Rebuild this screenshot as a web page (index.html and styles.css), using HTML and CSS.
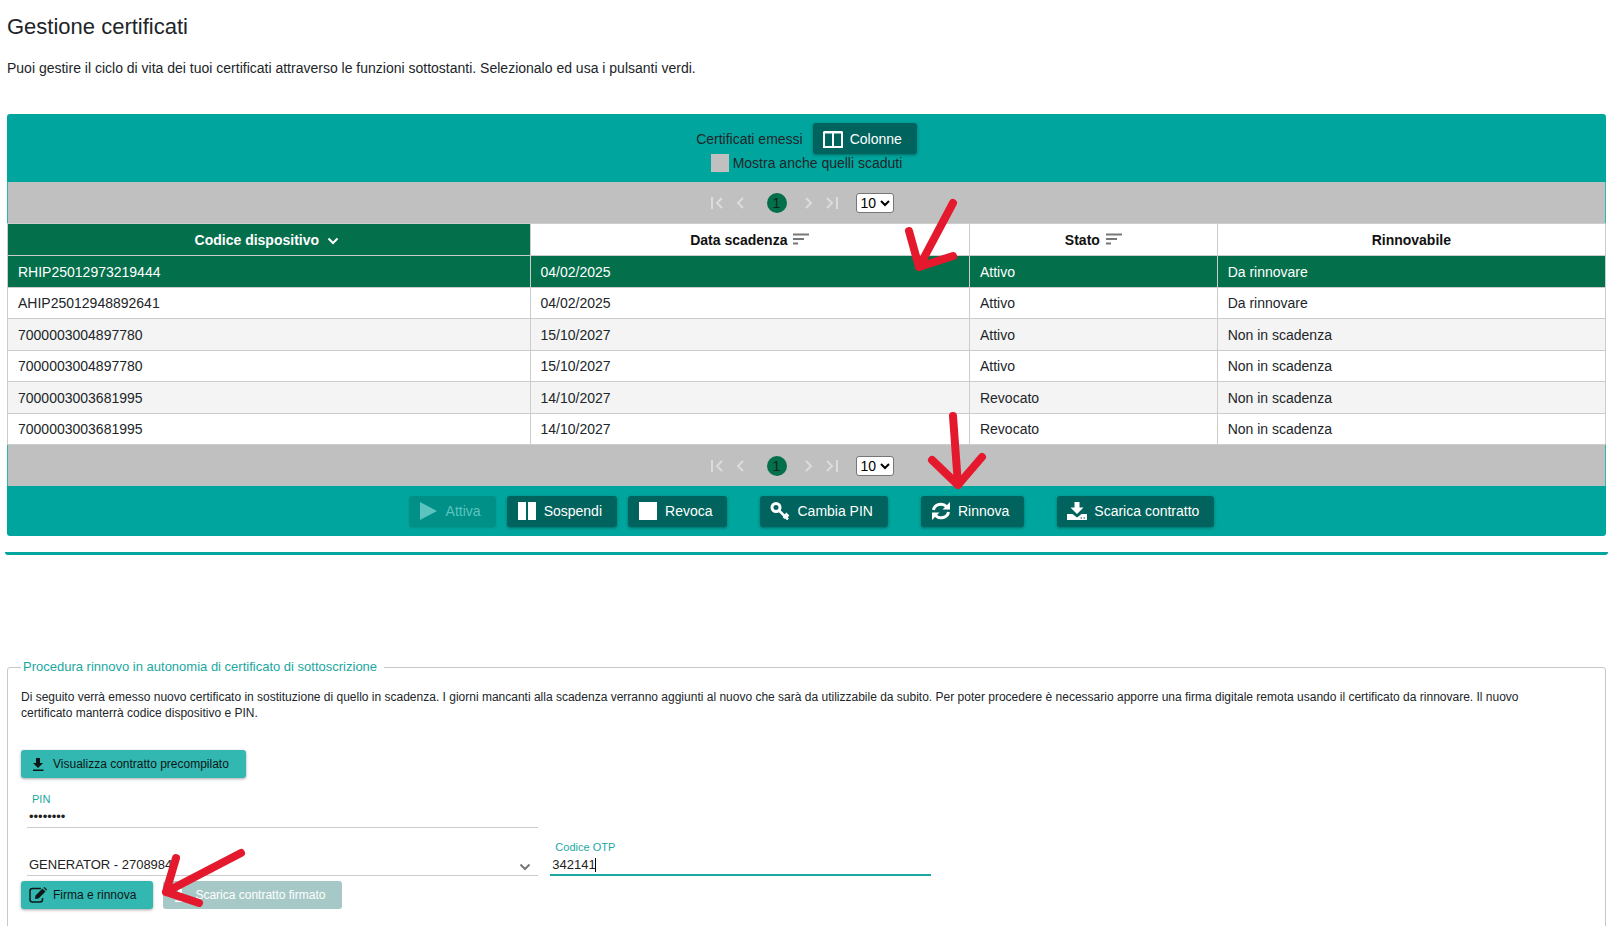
FILE: index.html
```html
<!DOCTYPE html>
<html lang="it">
<head>
<meta charset="utf-8">
<title>Gestione certificati</title>
<link rel="stylesheet" href="styles.css">
</head>
<body>
<main class="page">
  <h1 class="title">Gestione certificati</h1>
  <p class="intro">Puoi gestire il ciclo di vita dei tuoi certificati attraverso le funzioni sottostanti. Selezionalo ed usa i pulsanti verdi.</p>

  <section class="panel">
    <header class="panel-header">
      <div class="header-row">
        <span>Certificati emessi</span>
        <button type="button" class="btn">
          <svg class="icon" viewBox="0 0 20 18"><path fill="none" stroke="currentColor" stroke-width="2" d="M1 2.500h18v14.500h-18zM10 2v15M1 2h18"/></svg>
          Colonne
        </button>
      </div>
      <label class="check"><input type="checkbox" class="check-box">Mostra anche quelli scaduti</label>
    </header>

    <nav class="pager" aria-label="Pagine, in alto">
      <button type="button" class="page-nav" aria-label="Prima pagina"><svg viewBox="0 0 12 12"><path d="M1 0v12M11 1L6 6l5 5"/></svg></button>
      <button type="button" class="page-nav" aria-label="Pagina precedente"><svg viewBox="0 0 12 12"><path d="M9 1L4 6l5 5"/></svg></button>
      <button type="button" class="page-number">1</button>
      <button type="button" class="page-nav" aria-label="Pagina successiva"><svg viewBox="0 0 12 12"><path d="M3 1l5 5-5 5"/></svg></button>
      <button type="button" class="page-nav" aria-label="Ultima pagina"><svg viewBox="0 0 12 12"><path d="M11 0v12M1 1l5 5-5 5"/></svg></button>
      <select class="page-size" aria-label="Righe per pagina"><option>10</option></select>
    </nav>

    <table class="grid">
      <colgroup><col class="col-code"><col class="col-date"><col class="col-state"><col class="col-renew"></colgroup>
      <thead>
        <tr>
          <th class="sorted">Codice dispositivo <svg class="sort-arrow" viewBox="0 0 12 8"><path d="M1.500 1.500L6 6l4.500-4.500"/></svg></th>
          <th>Data scadenza <svg class="sort-bars" viewBox="0 0 16 12"><path d="M0 1.500h16M0 6h11M0 10.500h5"/></svg></th>
          <th>Stato <svg class="sort-bars" viewBox="0 0 16 12"><path d="M0 1.500h16M0 6h11M0 10.500h5"/></svg></th>
          <th>Rinnovabile</th>
        </tr>
      </thead>
      <tbody>
        <tr class="selected"><td>RHIP25012973219444</td><td>04/02/2025</td><td>Attivo</td><td>Da rinnovare</td></tr>
        <tr><td>AHIP25012948892641</td><td>04/02/2025</td><td>Attivo</td><td>Da rinnovare</td></tr>
        <tr><td>7000003004897780</td><td>15/10/2027</td><td>Attivo</td><td>Non in scadenza</td></tr>
        <tr><td>7000003004897780</td><td>15/10/2027</td><td>Attivo</td><td>Non in scadenza</td></tr>
        <tr><td>7000003003681995</td><td>14/10/2027</td><td>Revocato</td><td>Non in scadenza</td></tr>
        <tr><td>7000003003681995</td><td>14/10/2027</td><td>Revocato</td><td>Non in scadenza</td></tr>
      </tbody>
    </table>

    <nav class="pager" aria-label="Pagine, in basso">
      <button type="button" class="page-nav" aria-label="Prima pagina"><svg viewBox="0 0 12 12"><path d="M1 0v12M11 1L6 6l5 5"/></svg></button>
      <button type="button" class="page-nav" aria-label="Pagina precedente"><svg viewBox="0 0 12 12"><path d="M9 1L4 6l5 5"/></svg></button>
      <button type="button" class="page-number">1</button>
      <button type="button" class="page-nav" aria-label="Pagina successiva"><svg viewBox="0 0 12 12"><path d="M3 1l5 5-5 5"/></svg></button>
      <button type="button" class="page-nav" aria-label="Ultima pagina"><svg viewBox="0 0 12 12"><path d="M11 0v12M1 1l5 5-5 5"/></svg></button>
      <select class="page-size" aria-label="Righe per pagina"><option>10</option></select>
    </nav>

    <footer class="actions">
      <div class="action-group">
        <button type="button" class="btn" disabled><svg class="icon" viewBox="0 0 20 18"><path fill="currentColor" d="M1 0l17 9-17 9z"/></svg>Attiva</button>
        <button type="button" class="btn"><svg class="icon" viewBox="0 0 20 18"><path fill="currentColor" d="M1 0h8v18H1zM11 0h8v18h-8z"/></svg>Sospendi</button>
        <button type="button" class="btn"><svg class="icon" viewBox="0 0 20 18"><path fill="currentColor" d="M1 0h18v18H1z"/></svg>Revoca</button>
      </div>
      <button type="button" class="btn"><svg class="icon" viewBox="0 0 20 18"><g fill="none" stroke="currentColor"><circle cx="6" cy="5.500" r="4" stroke-width="3"/><path stroke-width="2.500" d="M8.500 8L18 17.500M13.500 16l2.500-2.500M16 13.500M15.500 11.500l3 3"/></g></svg>Cambia PIN</button>
      <button type="button" class="btn"><svg class="icon" viewBox="0 0 20 18"><g fill="none" stroke="currentColor" stroke-width="3"><path d="M2.500 8a7.500 6.800 0 0 1 13-3.500"/><path d="M17.500 10a7.500 6.800 0 0 1-13 3.500"/></g><path fill="currentColor" d="M19 0v7.500h-7.500zM1 18v-7.500h7.500z"/></svg>Rinnova</button>
      <button type="button" class="btn"><svg class="icon" viewBox="0 0 20 18"><path fill="currentColor" d="M7.500 0h5v5.500h4L10 12 3.500 5.500h4zM0 12h5.500l4.500 3.500 4.500-3.500H20v6H0z"/><path stroke="#00635d" stroke-width="1" d="M13.500 16h1.500M16.500 16h1.500"/></svg>Scarica contratto</button>
    </footer>
  </section>

  <hr class="divider">

  <fieldset class="renewal">
    <legend class="legend">Procedura rinnovo in autonomia di certificato di sottoscrizione</legend>
    <p class="notice">Di seguito verrà emesso nuovo certificato in sostituzione di quello in scadenza. I giorni mancanti alla scadenza verranno aggiunti al nuovo che sarà da utilizzabile da subito. Per poter procedere è necessario apporre una firma digitale remota usando il certificato da rinnovare. Il nuovo certificato manterrà codice dispositivo e PIN.</p>
    <button type="button" class="btn-light"><svg class="icon-small" viewBox="0 0 18 16"><path fill="currentColor" d="M7 2h4v5h3L9 12 4 7h3zM4 13.500h10.500v1.500H4z"/></svg>Visualizza contratto precompilato</button>

    <div class="fields">
      <div class="field field-pin">
        <label class="field-label" for="pin">PIN</label>
        <input class="field-input" id="pin" type="password" value="12345678">
      </div>
      <div class="field field-device">
        <select class="field-input field-select" aria-label="Dispositivo OTP"><option>GENERATOR - 2708984</option></select>
        <svg class="select-arrow" viewBox="0 0 12 8"><path d="M1.500 1.500L6 6l4.500-4.500"/></svg>
      </div>
      <div class="field field-otp">
        <label class="field-label" for="otp">Codice OTP</label>
        <div class="otp-line"><input class="field-input" id="otp" type="text" value="342141"><span class="caret"></span></div>
      </div>
    </div>

    <div class="form-actions">
      <button type="button" class="btn-light"><svg class="icon-small" viewBox="0 0 18 16"><path fill="none" stroke="currentColor" stroke-width="1.500" d="M12 1.500H3.500Q1 1.500 1 4v8.500Q1 15 3.500 15H11q2.500 0 2.500-2.500V11"/><path fill="currentColor" d="M6.500 8.500L13.500 1.500l3 3-7 7-3.500.5zM14.500.5l1-.5 2.500 2.500-.7 1.200z"/></svg>Firma e rinnova</button>
      <button type="button" class="btn-light" disabled><svg class="icon-small" viewBox="0 0 18 16"><path fill="currentColor" d="M7 2h4v5h3L9 12 4 7h3zM4 13.500h10.500v1.500H4z"/></svg>Scarica contratto firmato</button>
    </div>
  </fieldset>

  <svg class="pointer pointer-row" viewBox="0 0 60 80"><path d="M53 8L19 72M9 36l10 36 34-11"/></svg>
  <svg class="pointer pointer-renew" viewBox="0 0 60 80"><path d="M26 6l5 69M5 50l26 25 24-28"/></svg>
  <svg class="pointer pointer-sign" viewBox="0 0 90 60"><path d="M82 6L7 45M17 11L7 45l33 11"/></svg>
</main>
</body>
</html>
```
FILE: styles.css
```css
* { box-sizing: border-box; }

html { overflow: hidden; }

body {
  margin: 0;
  background: #fff;
  color: #212529;
  font-family: "Liberation Sans", Arial, sans-serif;
  font-size: 14px;
}

button, input, select { font-family: inherit; font-size: inherit; }

.page {
  position: relative;
  padding: 14px 7px 0;
}

.title {
  margin: 0 0 20px;
  font-size: 22px;
  line-height: 26px;
  font-weight: 400;
}

.intro { margin: 0 0 37px; line-height: 17px; }

.panel {
  background: #00a59d;
  border-radius: 3px;
}

.panel-header {
  display: flex;
  flex-direction: column;
  align-items: center;
  padding: 9px 0 10px;
}

.header-row { display: flex; align-items: center; gap: 10px; }

.btn {
  display: inline-flex;
  align-items: center;
  gap: 7px;
  height: 31px;
  padding: 0 15px 0 10px;
  border: 0;
  border-radius: 3px;
  background: #00635d;
  color: #fff;
  box-shadow: 0 1px 3px rgba(0, 0, 0, .35);
}

.btn:disabled {
  background: #009088;
  color: #5cc4be;
  box-shadow: 0 1px 2px rgba(0, 0, 0, .12);
}

.icon { width: 20px; height: 18px; }

.check { display: flex; align-items: center; gap: 4px; }

.check-box {
  appearance: none;
  width: 18px;
  height: 18px;
  margin: 0;
  background: #c0c0c0;
}

.pager {
  display: flex;
  align-items: center;
  justify-content: center;
  height: 41px;
  padding-right: 14px;
  border: solid #2db5ae;
  border-width: 0 1px;
  background: #c0c0c0;
}

.page-nav {
  width: 23px;
  height: 20px;
  padding: 0;
  border: 0;
  background: none;
  color: #dcdcdc;
  line-height: 0;
}

.page-nav svg { width: 12px; height: 12px; fill: none; stroke: currentColor; stroke-width: 2; }

.page-number {
  width: 20px;
  height: 20px;
  margin: 0 11px 0 15px;
  padding: 0;
  border: 0;
  border-radius: 50%;
  background: #046f4b;
  color: #10241c;
}

.page-size {
  height: 20px;
  width: 38px;
  margin-left: 12px;
  padding: 0;
  border: 1px solid #767676;
  border-radius: 3px;
  background: #fff;
  color: #000;
}

.grid {
  width: 100%;
  border-collapse: collapse;
  table-layout: fixed;
  background: #fff;
}

.col-code { width: 32.7%; }
.col-date { width: 27.5%; }
.col-state { width: 15.5%; }
.col-renew { width: 24.3%; }

.grid th, .grid td { border: 1px solid #ccc; padding: 0 10px; height: 32px; }
.grid th { color: #111; text-align: center; }
.grid .sorted { background: #046f4b; color: #fff; }
.grid td { text-align: left; }
.grid tbody tr:nth-child(odd) { background: #f4f4f4; }
.grid tbody tr:nth-child(even) td { height: 31px; }
.grid tbody tr.selected:nth-child(n) { background: #046f4b; color: #fff; }

.sort-arrow { width: 12px; height: 8px; margin: 0 4px; fill: none; stroke: currentColor; stroke-width: 2; }
.sort-bars { width: 16px; height: 12px; margin-left: 2px; fill: none; stroke: #777; stroke-width: 2; }

.actions {
  display: flex;
  align-items: center;
  justify-content: center;
  gap: 33px;
  height: 50px;
  padding-left: 10px;
}

.action-group { display: flex; gap: 11px; }

.divider {
  height: 3px;
  margin: 16px -2px 104px;
  border: 0;
  border-radius: 0 0 3px 3px;
  background: #00a59d;
}

.renewal {
  min-width: 0;
  margin: 0;
  padding: 14px 13px 60px;
  border: 1px solid #c8c8c8;
  border-radius: 3px;
}

.legend { padding: 0 7px 0 2px; color: #1aa79f; font-size: 13px; line-height: 16px; }

.notice { margin: 0 0 29px; padding-right: 32px; font-size: 12px; line-height: 16px; }

.btn-light {
  display: inline-flex;
  align-items: center;
  gap: 6px;
  height: 28px;
  padding: 0 17px 0 8px;
  border: 0;
  border-radius: 3px;
  background: #33b8b1;
  color: #0d1717;
  font-size: 12px;
  box-shadow: 0 1px 3px rgba(0, 0, 0, .35);
}

.btn-light:disabled { background: #a6c9c7; color: #fff; box-shadow: none; }

.icon-small { width: 18px; height: 16px; }

.fields {
  display: grid;
  grid-template-columns: 32.8% 24.4%;
  column-gap: 12px;
  padding: 14px 6px 0;
}

.field { position: relative; display: flex; flex-direction: column; justify-content: flex-end; }
.field-pin, .field-device { grid-column: 1; }
.field-device { height: 48px; }

.field-label { padding-left: 5px; color: #1aa79f; font-size: 11px; line-height: 14px; }

.field-input {
  width: 100%;
  height: 22px;
  padding: 0 2px;
  border: 0;
  border-bottom: 1px solid #ccc;
  outline: 0;
  background: none;
  color: #222;
  font-size: 13px;
}

.field-select { appearance: none; }

.select-arrow {
  position: absolute;
  right: 7px;
  bottom: 5px;
  width: 12px;
  height: 8px;
  fill: none;
  stroke: #777;
  stroke-width: 2;
}

.otp-line { position: relative; }
.otp-line .field-input { border-bottom: 2px solid #1aa79f; }
.caret { position: absolute; left: 45px; top: 4px; width: 1px; height: 14px; background: #000; }

.form-actions { display: flex; gap: 10px; padding-top: 5px; }

.pointer {
  position: absolute;
  fill: none;
  stroke: #e5192d;
  stroke-width: 8;
  stroke-linecap: round;
  stroke-linejoin: round;
  pointer-events: none;
}

.pointer-row { left: 900px; top: 195px; width: 60px; height: 80px; }
.pointer-renew { left: 927px; top: 410px; width: 60px; height: 80px; }
.pointer-sign { left: 159px; top: 847px; width: 90px; height: 60px; }
```
